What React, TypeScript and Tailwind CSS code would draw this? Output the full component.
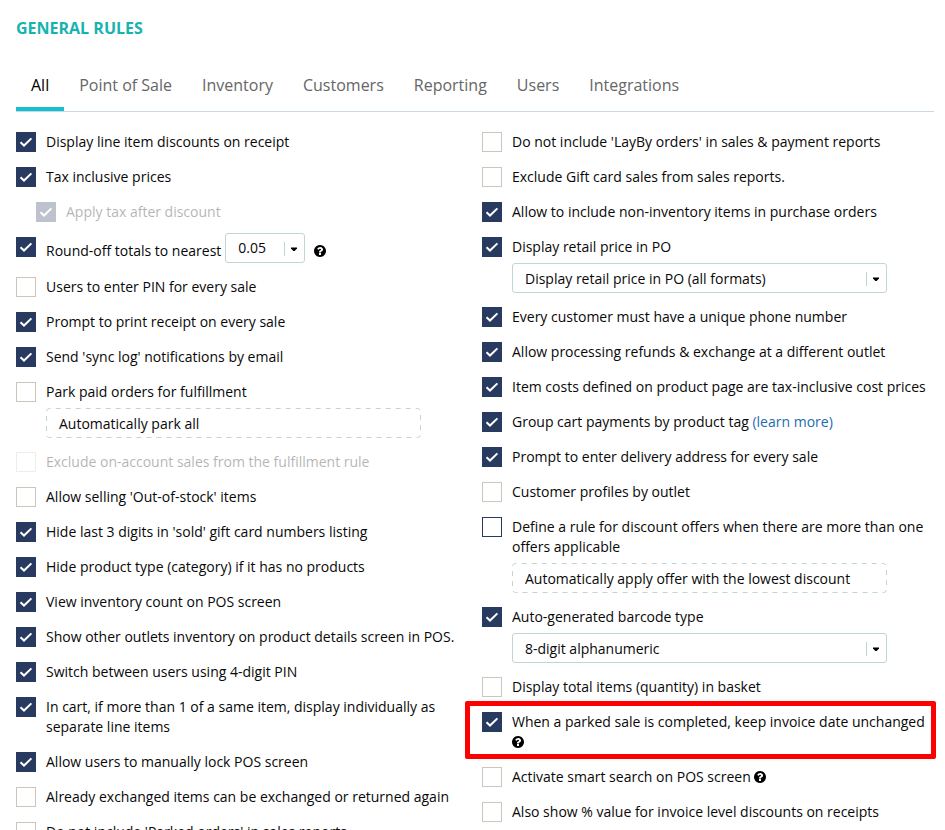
import type { ReactNode } from 'react';

type RuleProps = {
  checked?: boolean;
  disabled?: boolean;
  focused?: boolean;
  indent?: boolean;
  highlighted?: boolean;
  control?: ReactNode;
  children: ReactNode;
};

function Checkbox({ checked, disabled, focused }: { checked?: boolean; disabled?: boolean; focused?: boolean }) {
  if (checked) {
    return (
      <span className={`block size-5 shrink-0 bg-[#293a61] ${disabled ? 'opacity-30' : ''}`}>
        <svg viewBox="0 0 20 20" className="size-5" fill="none" stroke="#fff" strokeWidth="2">
          <path d="M4.5 10.2 8 13.5 15.4 6.4" />
        </svg>
      </span>
    );
  }
  const border = focused ? 'border-[#293a61]' : 'border-[#cbc5bb]';
  return <span className={`block size-5 shrink-0 border bg-white ${border} ${disabled ? 'opacity-30' : ''}`} />;
}

function Rule({ checked, disabled, focused, indent, highlighted, control, children }: RuleProps) {
  return (
    <div className={`relative flex gap-2.5 ${indent ? 'pl-5' : ''}`}>
      <Checkbox checked={checked} disabled={disabled} focused={focused} />
      <div className="min-w-0 flex-1">
        <div className={`whitespace-nowrap leading-5 ${disabled ? 'opacity-30' : ''}`}>{children}</div>
        {control}
      </div>
      {highlighted && (
        <div className="absolute -left-[17px] -top-[11px] h-[58px] w-[471px] rounded-[2px] border-[5px] border-[#fe0000]" />
      )}
    </div>
  );
}

function Arrow() {
  return (
    <span className="mt-0.5 flex h-[14px] w-5 items-center justify-center border-l border-[#c0d6d3] pr-px">
      <svg width="6" height="4" viewBox="0 0 6 4" className="block">
        <path d="M0 0.4H6V1.4L3.6 4H2.4L0 1.4Z" fill="#000" />
      </svg>
    </span>
  );
}

function Select({ children }: { children: ReactNode }) {
  return (
    <div className="mt-1.5 -mb-px flex h-[30px] w-[375px] items-center justify-between rounded-[3px] border border-[#c0d6d3] bg-white pl-3">
      <span>{children}</span>
      <Arrow />
    </div>
  );
}

function LockedSelect({ children }: { children: ReactNode }) {
  return (
    <div className="relative mt-1.5 -mb-px flex h-[30px] w-[375px] items-center pl-[13px]">
      <svg className="absolute inset-0" width="375" height="30" fill="none">
        <rect
          x="0.5"
          y="0.5"
          width="374"
          height="29"
          rx="3"
          stroke="#c0d6d3"
          strokeDasharray="5 5"
          strokeDashoffset="-6.2"
        />
      </svg>
      <span>{children}</span>
    </div>
  );
}

function Help({ className = '' }: { className?: string }) {
  return (
    <svg viewBox="128 128 1536 1536" fill="#000" className={`inline-block size-3 shrink-0 ${className}`}>
      <path d="M1024 1376v-192q0-14-9-23t-23-9h-192q-14 0-23 9t-9 23v192q0 14 9 23t23 9h192q14 0 23-9t9-23zm256-672q0-88-55.5-163t-138.5-116-170-41q-243 0-371 213-15 24 8 42l132 100q7 6 19 6 16 0 25-12 53-68 86-92 34-24 86-24 48 0 85.5 26t37.5 59q0 38-20 61t-68 45q-63 28-115.5 86.5t-52.5 125.5v36q0 14 9 23t23 9h192q14 0 23-9t9-23q0-19 21.5-49.5t54.5-49.5q32-18 49-28.5t46-35 44.5-48 28-60.5 12.5-81zm384 192q0 209-103 385.5t-279.5 279.5-385.5 103-385.5-103-279.5-279.5-103-385.5 103-385.5 279.5-279.5 385.5-103 385.5 103 279.5 279.5 103 385.5z" />
    </svg>
  );
}

const tabs = ['Point of Sale', 'Inventory', 'Customers', 'Reporting', 'Users', 'Integrations'];

export default function App() {
  return (
    <main className="h-[830px] w-[945px] overflow-hidden bg-white pl-4 font-['Open_Sans',sans-serif] text-[14px] text-[#080808]">
      <h1 className="pt-[18px] text-[16px] font-bold leading-5 text-[#17b3ad]">GENERAL RULES</h1>
      <nav className="mt-[21px] flex h-[53px] w-[918px] border-b border-[#ccd9e2] text-[16px] leading-[52px] text-[#666]">
        <a className="relative px-[15px] text-black">
          All
          <span className="absolute bottom-0 left-0 h-1 w-full bg-[#17bed0]" />
        </a>
        {tabs.map((tab) => (
          <a key={tab} className="whitespace-nowrap px-[15px]">
            {tab}
          </a>
        ))}
      </nav>
      <div className="flex pt-5">
        <section className="flex w-[466px] shrink-0 flex-col gap-[15px]">
          <Rule checked>Display line item discounts on receipt</Rule>
          <Rule checked>Tax inclusive prices</Rule>
          <Rule checked disabled indent>Apply tax after discount</Rule>
          <Rule checked>
            <span className="-mt-1 flex h-[29px] items-start">
              <span className="pt-2">Round-off totals to nearest</span>
              <span className="ml-1 flex h-[30px] w-20 shrink-0 items-center justify-between rounded-[3px] border border-[#c0d6d3] bg-white pl-3">
                <span>0.05</span>
                <Arrow />
              </span>
              <Help className="ml-[9px] mt-3" />
            </span>
          </Rule>
          <Rule>Users to enter PIN for every sale</Rule>
          <Rule checked>Prompt to print receipt on every sale</Rule>
          <Rule checked>Send 'sync log' notifications by email</Rule>
          <Rule control={<LockedSelect>Automatically park all</LockedSelect>}>Park paid orders for fulfillment</Rule>
          <Rule disabled>Exclude on-account sales from the fulfillment rule</Rule>
          <Rule>Allow selling 'Out-of-stock' items</Rule>
          <Rule checked>Hide last 3 digits in 'sold' gift card numbers listing</Rule>
          <Rule checked>Hide product type (category) if it has no products</Rule>
          <Rule checked>View inventory count on POS screen</Rule>
          <Rule checked>Show other outlets inventory on product details screen in POS.</Rule>
          <Rule checked>Switch between users using 4-digit PIN</Rule>
          <Rule checked>
            In cart, if more than 1 of a same item, display individually as
            <br />
            separate line items
          </Rule>
          <Rule checked>Allow users to manually lock POS screen</Rule>
          <Rule>Already exchanged items can be exchanged or returned again</Rule>
          <Rule>Do not include 'Parked orders' in sales reports</Rule>
        </section>
        <section className="flex flex-1 flex-col gap-[15px]">
          <Rule>Do not include 'LayBy orders' in sales &amp; payment reports</Rule>
          <Rule>Exclude Gift card sales from sales reports.</Rule>
          <Rule checked>Allow to include non-inventory items in purchase orders</Rule>
          <Rule checked control={<Select>Display retail price in PO (all formats)</Select>}>
            Display retail price in PO
          </Rule>
          <Rule checked>Every customer must have a unique phone number</Rule>
          <Rule checked>Allow processing refunds &amp; exchange at a different outlet</Rule>
          <Rule checked>Item costs defined on product page are tax-inclusive cost prices</Rule>
          <Rule checked>
            Group cart payments by product tag <a className="text-[#236bb0]">(learn more)</a>
          </Rule>
          <Rule checked>Prompt to enter delivery address for every sale</Rule>
          <Rule>Customer profiles by outlet</Rule>
          <Rule focused control={<LockedSelect>Automatically apply offer with the lowest discount</LockedSelect>}>
            Define a rule for discount offers when there are more than one
            <br />
            offers applicable
          </Rule>
          <Rule checked control={<Select>8-digit alphanumeric</Select>}>Auto-generated barcode type</Rule>
          <Rule>Display total items (quantity) in basket</Rule>
          <Rule checked highlighted>
            When a parked sale is completed, keep invoice date unchanged
            <span className="flex h-5 items-center">
              <Help />
            </span>
          </Rule>
          <Rule>
            <span className="flex items-center">
              Activate smart search on POS screen
              <Help className="ml-[3px]" />
            </span>
          </Rule>
          <Rule>Also show % value for invoice level discounts on receipts</Rule>
        </section>
      </div>
    </main>
  );
}
